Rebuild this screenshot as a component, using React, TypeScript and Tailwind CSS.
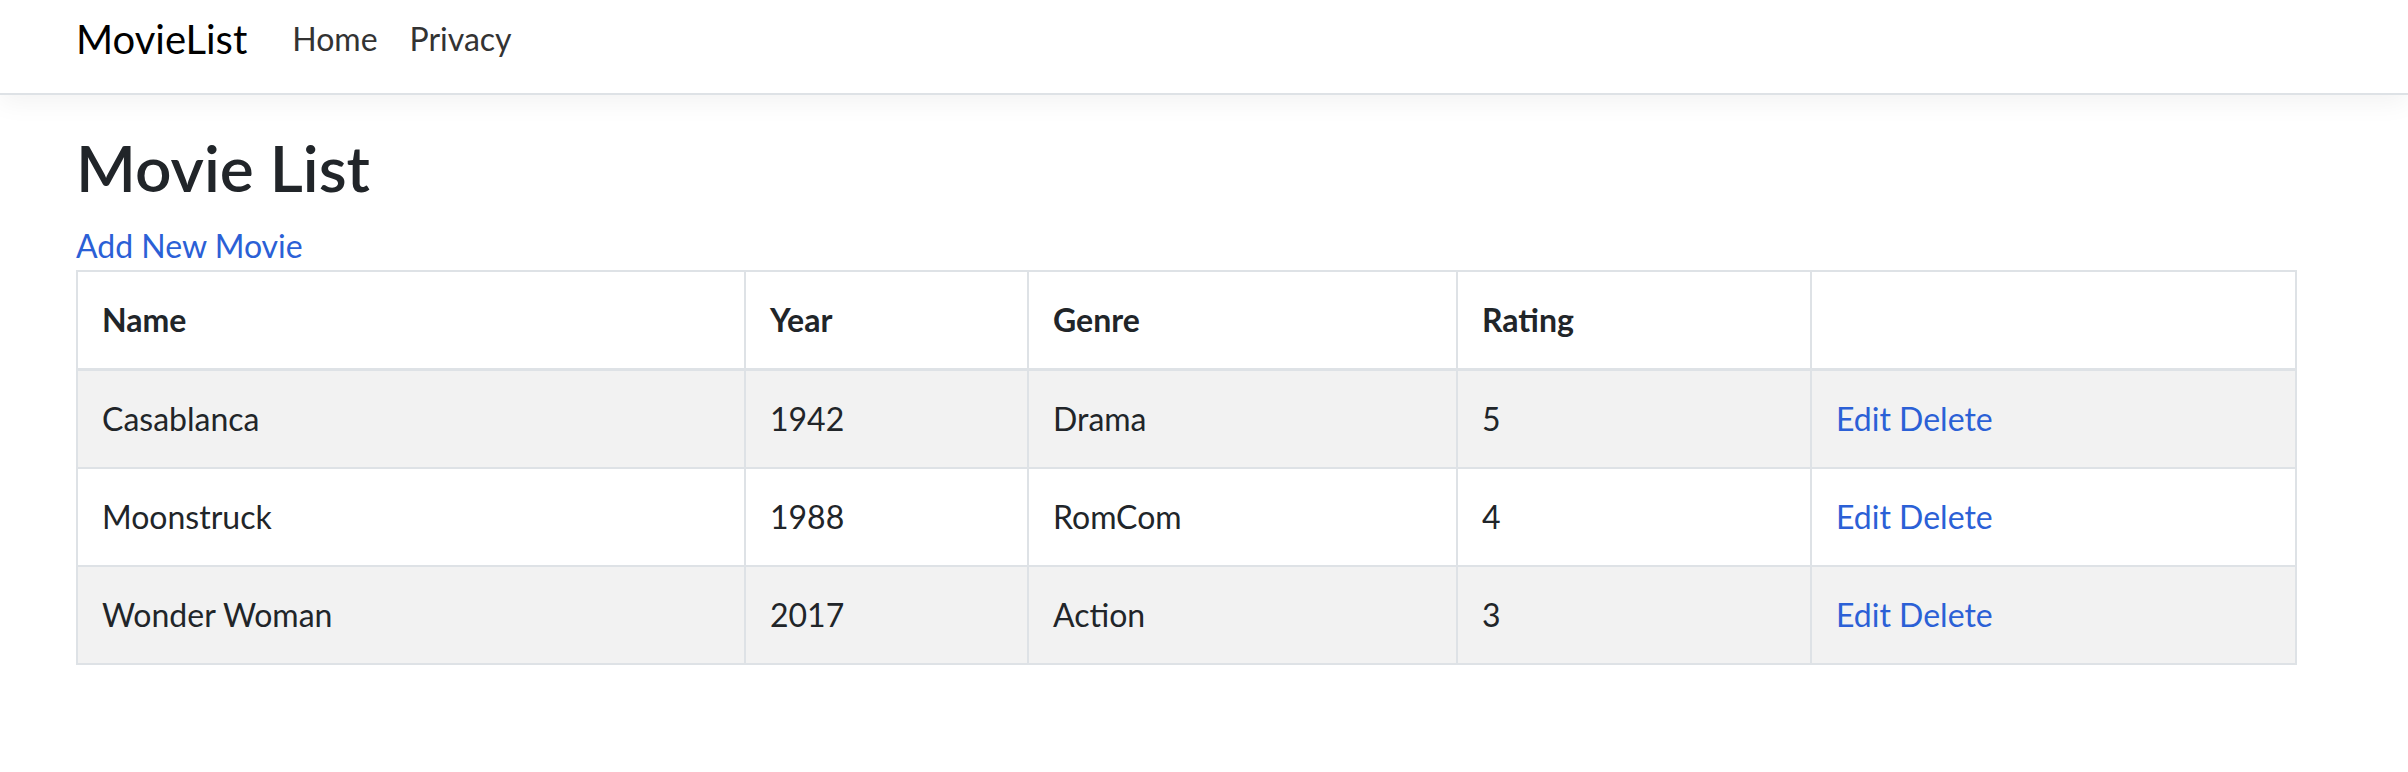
const movies = [
  { name: "Casablanca", year: 1942, genre: "Drama", rating: 5 },
  { name: "Moonstruck", year: 1988, genre: "RomCom", rating: 4 },
  { name: "Wonder Woman", year: 2017, genre: "Action", rating: 3 },
]

const cell = "border-2 border-[#dee2e6] px-[24px] py-[24px] leading-[48px] align-top text-left"

export default function App() {
  return (
    <div className="min-h-[772px] bg-white text-[#212529] font-['Lato','Noto_Sans',sans-serif] text-[32px]">
      <header className="h-[95px] border-b-2 border-[#dee2e6] bg-white shadow-[0_8px_24px_rgba(0,0,0,0.05)]">
        <nav className="flex items-start pt-[15px] pl-[76px]">
          <a href="#" className="mr-[29px] text-[40px] leading-[48px] text-black">
            MovieList
          </a>
          <a href="#" className="px-[16px] leading-[48px] text-[#333333]">
            Home
          </a>
          <a href="#" className="px-[16px] leading-[48px] text-[#333333]">
            Privacy
          </a>
        </nav>
      </header>

      <main className="pl-[76px]">
        <h1 className="mt-[32px] mb-[13px] text-[64px] font-semibold leading-[82px]">Movie List</h1>
        <p className="leading-[48px]">
          <a href="#" className="text-[#2b60d6]">
            Add New Movie
          </a>
        </p>

        <table className="w-[2219px] border-collapse table-fixed">
          <colgroup>
            <col className="w-[668px]" />
            <col className="w-[283px]" />
            <col className="w-[429px]" />
            <col className="w-[354px]" />
            <col className="w-[485px]" />
          </colgroup>
          <thead>
            <tr className="border-b-[3px] border-[#dee2e6]">
              <th className={`${cell} font-bold border-b-[3px]`}>Name</th>
              <th className={`${cell} font-bold border-b-[3px]`}>Year</th>
              <th className={`${cell} font-bold border-b-[3px]`}>Genre</th>
              <th className={`${cell} font-bold border-b-[3px]`}>Rating</th>
              <th className={`${cell} border-b-[3px]`}></th>
            </tr>
          </thead>
          <tbody>
            {movies.map((m, i) => (
              <tr key={m.name} className={i % 2 === 0 ? "bg-[#f2f2f2]" : "bg-white"}>
                <td className={cell}>{m.name}</td>
                <td className={cell}>{m.year}</td>
                <td className={cell}>{m.genre}</td>
                <td className={cell}>{m.rating}</td>
                <td className={cell}>
                  <a href="#" className="text-[#2b60d6]">
                    Edit
                  </a>{" "}
                  <a href="#" className="text-[#2b60d6]">
                    Delete
                  </a>
                </td>
              </tr>
            ))}
          </tbody>
        </table>
      </main>
    </div>
  )
}
